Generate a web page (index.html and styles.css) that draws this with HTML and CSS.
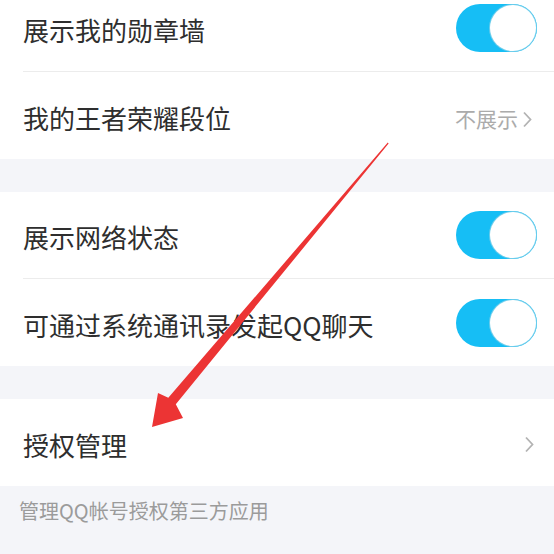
FILE: index.html
```html
<!DOCTYPE html>
<html lang="zh-CN">
<head>
  <meta charset="UTF-8">
  <meta name="viewport" content="width=device-width, initial-scale=1.0">
  <title>隐私设置</title>
  <link rel="stylesheet" href="styles.css">
</head>
<body>
  <div class="page">
    <!-- 资料展示 -->
    <div class="group">
      <div class="row">
        <span class="label">展示我的勋章墙</span>
        <span class="switch on"><span class="knob"></span></span>
      </div>
      <div class="row">
        <span class="label">我的王者荣耀段位</span>
        <span class="value">不展示
          <svg class="chevron" width="10" height="17" viewBox="0 0 10 17"><path d="M2 1.5 L8.5 8.5 L2 15.5" fill="none" stroke="#b3b3b3" stroke-width="1.8"/></svg>
        </span>
      </div>
    </div>

    <div class="gap"></div>

    <!-- 状态与通讯录 -->
    <div class="group">
      <div class="row">
        <span class="label">展示网络状态</span>
        <span class="switch on"><span class="knob"></span></span>
      </div>
      <div class="row">
        <span class="label">可通过系统通讯录发起QQ聊天</span>
        <span class="switch on"><span class="knob"></span></span>
      </div>
    </div>

    <div class="gap"></div>

    <!-- 授权管理 -->
    <div class="group">
      <div class="row">
        <span class="label">授权管理</span>
        <svg class="chevron" width="10" height="17" viewBox="0 0 10 17"><path d="M2 1.5 L8.5 8.5 L2 15.5" fill="none" stroke="#b3b3b3" stroke-width="1.8"/></svg>
      </div>
    </div>
    <p class="note">管理QQ帐号授权第三方应用</p>
  </div>

  <!-- 标注箭头 -->
  <svg class="annotation" width="554" height="554" viewBox="0 0 554 554">
    <polygon points="388.6,143.4 175.8,404.2 183,418 152,427 158,393 168.3,397.8 387.8,142.6" fill="#ec3434"/>
  </svg>
</body>
</html>
```

FILE: styles.css
```css
body {
  margin: 0;
  background: #f4f5f9;
  font-family: "Noto Sans CJK SC", "Noto Sans", sans-serif;
  color: #2e2e2e;
  overflow: hidden;
}

.page {
  margin-top: -15px;
}

.group {
  background: #fff;
}

.row {
  box-sizing: border-box;
  height: 87px;
  margin-left: 23px;
  padding-right: 17px;
  display: flex;
  align-items: center;
  justify-content: space-between;
  border-bottom: 1px solid #ececec;
}

.row:last-child {
  border-bottom: none;
}

.label {
  font-size: 26px;
  padding-top: 3px;
}

.value {
  display: flex;
  align-items: center;
  gap: 4px;
  font-size: 21px;
  color: #ababab;
  padding-top: 4px;
  margin-right: 2px;
}

.chevron {
  display: block;
  margin-right: 3px;
  margin-top: 4px;
}

.switch {
  position: relative;
  width: 81px;
  height: 48px;
  border-radius: 24px;
  background: #e5e5e5;
}

.switch.on {
  background: #16bef5;
}

.switch .knob {
  position: absolute;
  top: 1px;
  right: 1px;
  width: 46px;
  height: 46px;
  border-radius: 50%;
  background: #fff;
  box-shadow: 0 0 0 1px #6fcdeb;
}

.gap {
  height: 33px;
}

.note {
  margin: 0;
  padding: 11px 19px;
  font-size: 20px;
  line-height: 28px;
  color: #9b9b9b;
}

.annotation {
  position: absolute;
  left: 0;
  top: 0;
  pointer-events: none;
}
```
